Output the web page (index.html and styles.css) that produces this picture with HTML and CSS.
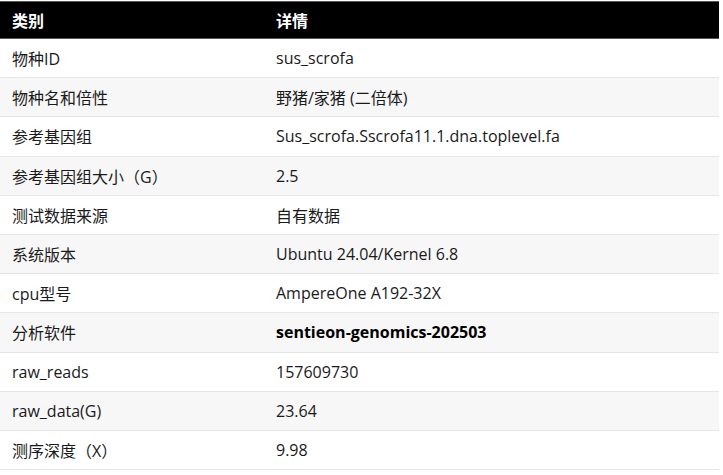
FILE: index.html
```html
<!DOCTYPE html>
<html lang="zh">
<head>
<meta charset="utf-8">
<link rel="stylesheet" href="styles.css">
</head>
<body>
<table class="info">
  <thead>
    <tr><th class="col-a">类别</th><th>详情</th></tr>
  </thead>
  <tbody>
    <tr><td>物种ID</td><td>sus_scrofa</td></tr>
    <tr><td>物种名和倍性</td><td>野猪/家猪 (二倍体)</td></tr>
    <tr><td>参考基因组</td><td>Sus_scrofa.Sscrofa11.1.dna.toplevel.fa</td></tr>
    <tr><td>参考基因组大小（G）</td><td>2.5</td></tr>
    <tr><td>测试数据来源</td><td>自有数据</td></tr>
    <tr><td>系统版本</td><td>Ubuntu 24.04/Kernel 6.8</td></tr>
    <tr><td>cpu型号</td><td>AmpereOne A192-32X</td></tr>
    <tr><td>分析软件</td><td><strong>sentieon-genomics-202503</strong></td></tr>
    <tr><td>raw_reads</td><td>157609730</td></tr>
    <tr><td>raw_data(G)</td><td>23.64</td></tr>
    <tr><td>测序深度（X）</td><td>9.98</td></tr>
  </tbody>
</table>
</body>
</html>
```
FILE: styles.css
```css
html, body {
  margin: 0;
  padding: 0;
  background: #ffffff;
}
body {
  padding-top: 1px;
  font-family: "Open Sans", "Noto Sans CJK SC", sans-serif;
  font-size: 16px;
  color: #1a1a1a;
}
.info {
  width: 719px;
  border-collapse: collapse;
}
.info th {
  background: #000000;
  color: #ffffff;
  font-weight: 700;
  font-size: 16px;
  text-align: left;
  height: 37px;
  padding: 0 12px;
  border-top: 1px solid #555555;
  border-bottom: 1px solid #555555;
  box-sizing: border-box;
}
.info th.col-a {
  width: 264px;
}
.info td {
  height: 39.2px;
  padding: 0 12px;
  border-bottom: 1px solid #e6e6e6;
  box-sizing: border-box;
}
.info tbody tr:nth-child(even) td {
  background: #f7f7f7;
}
.info strong {
  font-weight: 700;
  color: #000000;
}
```
